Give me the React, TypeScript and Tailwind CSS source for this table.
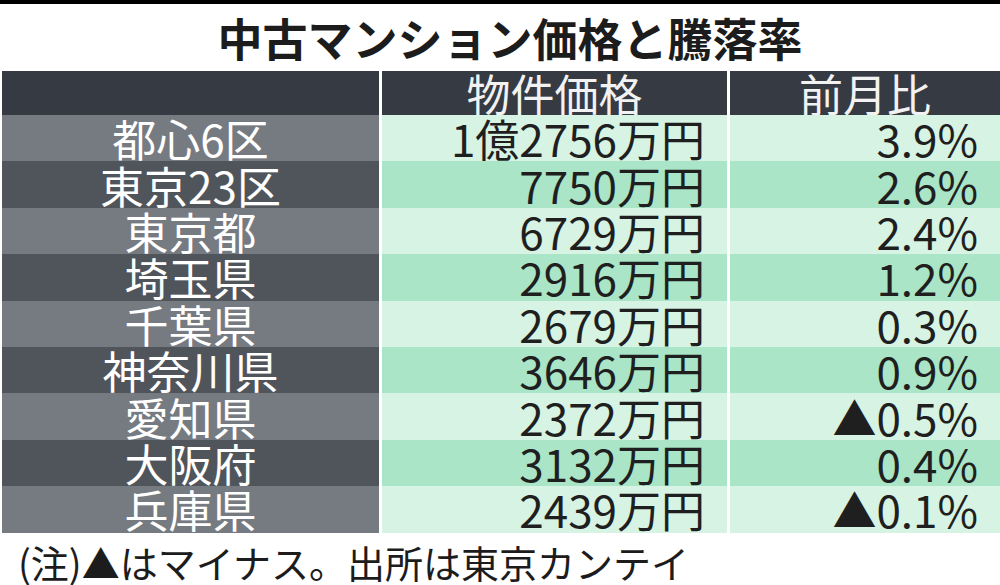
import React from "react";

type Row = { area: string; price: string; change: string };

const ROWS: Row[] = [
  { area: "都心6区", price: "1億2756万円", change: "3.9%" },
  { area: "東京23区", price: "7750万円", change: "2.6%" },
  { area: "東京都", price: "6729万円", change: "2.4%" },
  { area: "埼玉県", price: "2916万円", change: "1.2%" },
  { area: "千葉県", price: "2679万円", change: "0.3%" },
  { area: "神奈川県", price: "3646万円", change: "0.9%" },
  { area: "愛知県", price: "2372万円", change: "▲0.5%" },
  { area: "大阪府", price: "3132万円", change: "0.4%" },
  { area: "兵庫県", price: "2439万円", change: "▲0.1%" },
];

const FONT = { fontFamily: '"Noto Sans CJK JP", "Noto Sans", sans-serif' };

export default function App() {
  return (
    <div
      className="w-[1000px] h-[585px] bg-white overflow-hidden flex flex-col"
      style={FONT}
    >
      <div className="h-[4px] bg-black" />
      <div className="h-[67px] flex items-center justify-center pl-[20px]">
        <h1 className="text-[45px] leading-none font-bold text-[#1c1c1c]">
          中古マンション価格と騰落率
        </h1>
      </div>

      <div className="flex flex-col pl-[2px]">
        <div className="flex h-[44px] gap-[3px]">
          <div className="w-[377px] bg-[#363a42]" />
          <div className="w-[345px] bg-[#363a42] flex items-center justify-center text-[44px] leading-[44px] text-[#f2f2f2]">
            物件価格
          </div>
          <div className="flex-1 bg-[#363a42] flex items-center justify-center text-[44px] leading-[44px] text-[#f2f2f2]">
            前月比
          </div>
        </div>

        {ROWS.map((r, i) => {
          const odd = i % 2 === 0;
          return (
            <div key={r.area} className="flex h-[46.4px] gap-[3px]">
              <div
                className={
                  "w-[377px] flex items-center justify-center text-[44px] leading-[44px] text-white " +
                  (odd ? "bg-[#767b82]" : "bg-[#50555c]")
                }
              >
                {r.area}
              </div>
              <div
                className={
                  "w-[345px] flex items-center justify-end pr-[22px] text-[44px] leading-[44px] text-[#1f1f1f] " +
                  (odd ? "bg-[#d6f3e3]" : "bg-[#a9e5c6]")
                }
              >
                {r.price}
              </div>
              <div
                className={
                  "flex-1 flex items-center justify-end pr-[22px] text-[44px] leading-[44px] text-[#1f1f1f] " +
                  (odd ? "bg-[#d6f3e3]" : "bg-[#a9e5c6]")
                }
              >
                {r.change}
              </div>
            </div>
          );
        })}
      </div>

      <div className="pl-[18px] pt-[10px] text-[38px] leading-[38px] text-[#1c1c1c]">
        (注)▲はマイナス。出所は東京カンテイ
      </div>
    </div>
  );
}
